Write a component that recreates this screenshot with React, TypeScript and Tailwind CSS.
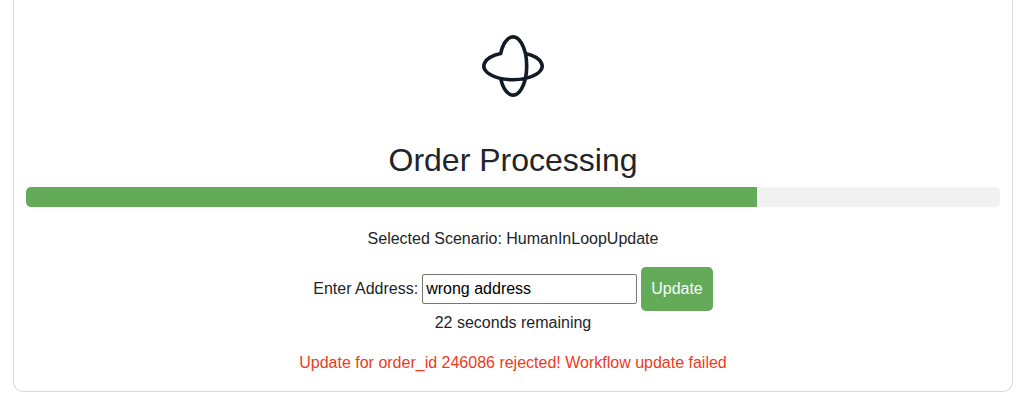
import { useState } from "react";

function Logo() {
  return (
    <svg
      viewBox="0 0 64 64"
      className="size-16"
      fill="none"
      stroke="#121a28"
      strokeWidth="3.6"
      strokeLinejoin="miter"
      role="img"
      aria-label="Temporal"
    >
      <path d="M44.4 19.6 A29.1 13.7 0 1 1 19.6 19.6 A13.7 29.1 0 1 1 19.6 44.4" />
    </svg>
  );
}

function ProgressBar({ percent }: { percent: number }) {
  return (
    <div
      role="progressbar"
      aria-valuenow={percent}
      aria-valuemin={0}
      aria-valuemax={100}
      aria-label="Order progress"
      className="h-5 w-full overflow-hidden rounded-[5px] bg-[#f1f1f1]"
    >
      <div className="h-full bg-[#63ab59]" style={{ width: `${percent}%` }} />
    </div>
  );
}

export default function App() {
  const [address, setAddress] = useState("wrong address");

  return (
    <div className="bg-white pr-[18px] pl-[13px] font-['Liberation_Sans',Arial,sans-serif] text-base text-[#212529]">
      <main className="flex flex-col items-center rounded-b-[10px] border-x border-b border-[#d9d9d9] px-3 pt-[34px] pb-4 text-center">
        <Logo />
        <h1 className="mt-[43px] mb-2 text-[32px] leading-[38px] font-normal">Order Processing</h1>
        <ProgressBar percent={75} />
        <p className="mt-5 mb-4">Selected Scenario: HumanInLoopUpdate</p>
        <form
          className="flex flex-wrap items-center justify-center gap-x-1"
          onSubmit={(event) => event.preventDefault()}
        >
          <label htmlFor="address">Enter Address:</label>
          <input
            id="address"
            type="text"
            value={address}
            onChange={(event) => setAddress(event.target.value)}
            className="h-[30px] w-[215px] rounded-[2px] border border-[#767676] bg-white px-[3px] text-black"
          />
          <button type="submit" className="rounded-[5px] bg-[#63ab59] p-[10px] text-[#f8fafc]">
            Update
          </button>
        </form>
        <p>22 seconds remaining</p>
        <p className="mt-4 text-[#ec3b1d]">
          Update for order_id 246086 rejected! Workflow update failed
        </p>
      </main>
    </div>
  );
}
